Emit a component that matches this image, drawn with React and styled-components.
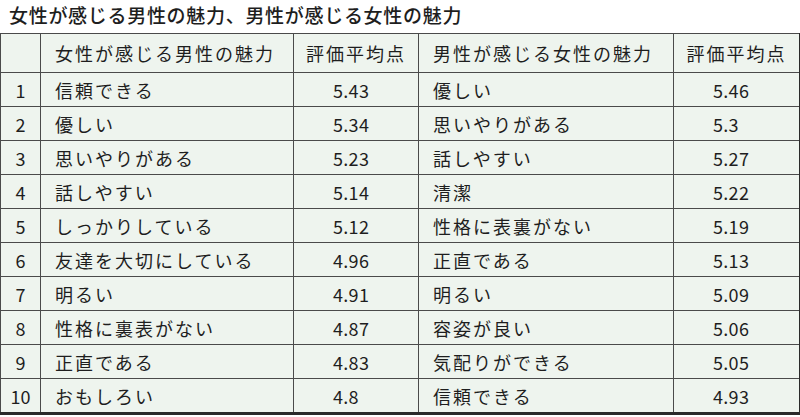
import React from "react";
import styled, { createGlobalStyle } from "styled-components";

const rows = [
    ["信頼できる", "5.43", "優しい", "5.46"],
    ["優しい", "5.34", "思いやりがある", "5.3"],
    ["思いやりがある", "5.23", "話しやすい", "5.27"],
    ["話しやすい", "5.14", "清潔", "5.22"],
    ["しっかりしている", "5.12", "性格に表裏がない", "5.19"],
    ["友達を大切にしている", "4.96", "正直である", "5.13"],
    ["明るい", "4.91", "明るい", "5.09"],
    ["性格に裏表がない", "4.87", "容姿が良い", "5.06"],
    ["正直である", "4.83", "気配りができる", "5.05"],
    ["おもしろい", "4.8", "信頼できる", "4.93"],
];

function App() {
    return (
        <>
            <GlobalStyle />
            <Page>
                <Title>女性が感じる男性の魅力、男性が感じる女性の魅力</Title>
                <Table>
                    <colgroup>
                        <col style={{ width: 40 }} />
                        <col style={{ width: 253 }} />
                        <col style={{ width: 125 }} />
                        <col style={{ width: 255 }} />
                        <col style={{ width: 127 }} />
                    </colgroup>
                    <thead>
                        <tr>
                            <HeadCell />
                            <HeadCell $left>女性が感じる男性の魅力</HeadCell>
                            <HeadCell>評価平均点</HeadCell>
                            <HeadCell $left>男性が感じる女性の魅力</HeadCell>
                            <HeadCell>評価平均点</HeadCell>
                        </tr>
                    </thead>
                    <tbody>
                        {rows.map((r, i) => (
                            <tr key={i}>
                                <NumCell>{i + 1}</NumCell>
                                <TextCell>{r[0]}</TextCell>
                                <ScoreCell>{r[1]}</ScoreCell>
                                <TextCell>{r[2]}</TextCell>
                                <ScoreCell>{r[3]}</ScoreCell>
                            </tr>
                        ))}
                    </tbody>
                </Table>
            </Page>
        </>
    );
}

export default App;

const GlobalStyle = createGlobalStyle`
    body {
        margin: 0;
        background: #ffffff;
        font-family: "Noto Sans CJK JP", "Noto Sans", sans-serif;
        color: #1e1e1e;
    }
`;

const Page = styled.div`
    width: 800px;
`;

const Title = styled.div`
    height: 33px;
    line-height: 30px;
    padding-left: 9px;
    font-size: 19px;
    font-weight: 500;
    letter-spacing: 0.7px;
    white-space: nowrap;
`;

const Table = styled.table`
    width: 800px;
    table-layout: fixed;
    border-collapse: collapse;
    background: #eef4ee;
    border-top: 1px solid #3a3a3a;
    border-left: 1px solid #3a3a3a;
    border-right: 3px solid #2a2a2a;
    border-bottom: 3px solid #2a2a2a;
`;

const Cell = styled.td`
    border: 1px solid #4a4a4a;
    padding: 0;
    font-size: 18px;
    white-space: nowrap;
    overflow: hidden;
`;

const HeadCell = styled(Cell).attrs({ as: "th" })`
    height: 38px;
    font-weight: 400;
    letter-spacing: 2px;
    text-align: ${(p) => (p.$left ? "left" : "center")};
    padding-left: ${(p) => (p.$left ? "14px" : "0")};
`;

const NumCell = styled(Cell)`
    height: 33px;
    text-align: center;
`;

const TextCell = styled(Cell)`
    height: 33px;
    padding-left: 14px;
    letter-spacing: 2px;
`;

const ScoreCell = styled(Cell)`
    height: 33px;
    padding-left: 39px;
    letter-spacing: 0.3px;
`;
